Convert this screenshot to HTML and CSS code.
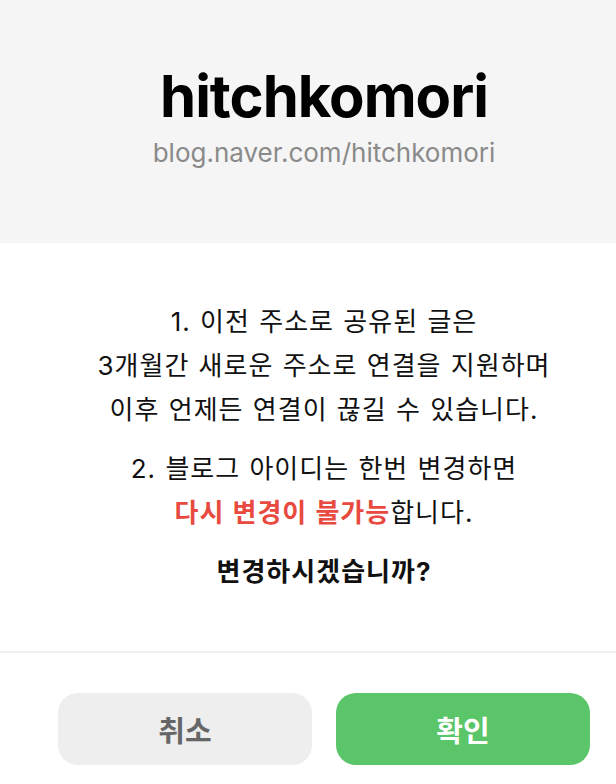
FILE: index.html
```html
<!DOCTYPE html>
<html lang="ko">
<head>
<meta charset="utf-8">
<link rel="stylesheet" href="styles.css">
</head>
<body>
<div class="dialog">
  <header class="head">
    <h1 class="title">hitchkomori</h1>
    <p class="url">blog.naver.com/hitchkomori</p>
  </header>
  <section class="content">
    <p class="para">1. 이전 주소로 공유된 글은<br>3개월간 새로운 주소로 연결을 지원하며<br>이후 언제든 연결이 끊길 수 있습니다.</p>
    <p class="para">2. 블로그 아이디는 한번 변경하면<br><strong class="warn">다시 변경이 불가능</strong>합니다.</p>
    <p class="question">변경하시겠습니까?</p>
  </section>
  <footer class="actions">
    <button class="btn btn-cancel">취소</button>
    <button class="btn btn-ok">확인</button>
  </footer>
</div>
</body>
</html>
```
FILE: styles.css
```css
* { box-sizing: border-box; }
html, body { margin: 0; padding: 0; background: #fff; }
body {
  font-family: Inter, "Noto Sans CJK KR", sans-serif;
  color: #111;
}
.dialog { width: 616px; }
.head {
  background: #f5f5f5;
  height: 243px;
  padding: 63px 26px 0 58px;
  display: flex;
  flex-direction: column;
  align-items: center;
}
.title {
  margin: 0;
  font-size: 58px;
  font-weight: 700;
  letter-spacing: -1px;
  line-height: 66px;
  color: #000;
}
.url {
  margin: 6px 0 0;
  font-size: 26px;
  line-height: 36px;
  color: #8a8a8a;
}
.content {
  padding: 57px 26px 57px 58px;
  text-align: center;
  font-size: 26px;
  line-height: 44px;
  letter-spacing: 1px;
  word-spacing: 1px;
  border-bottom: 2px solid #f0f0f0;
}
.para { margin: 0 0 15px; }
.warn { color: #e94a3f; font-weight: 700; }
.question { margin: 0; font-weight: 700; }
.actions {
  display: flex;
  gap: 24px;
  padding: 40px 26px 20px 58px;
}
.btn {
  flex: 1;
  height: 72px;
  border: 0;
  border-radius: 20px;
  font-family: Inter, "Noto Sans CJK KR", sans-serif;
  font-size: 29px;
  font-weight: 700;
}
.btn-cancel { background: #eeeeee; color: #666; }
.btn-ok { background: #5bc569; color: #fff; }
```
